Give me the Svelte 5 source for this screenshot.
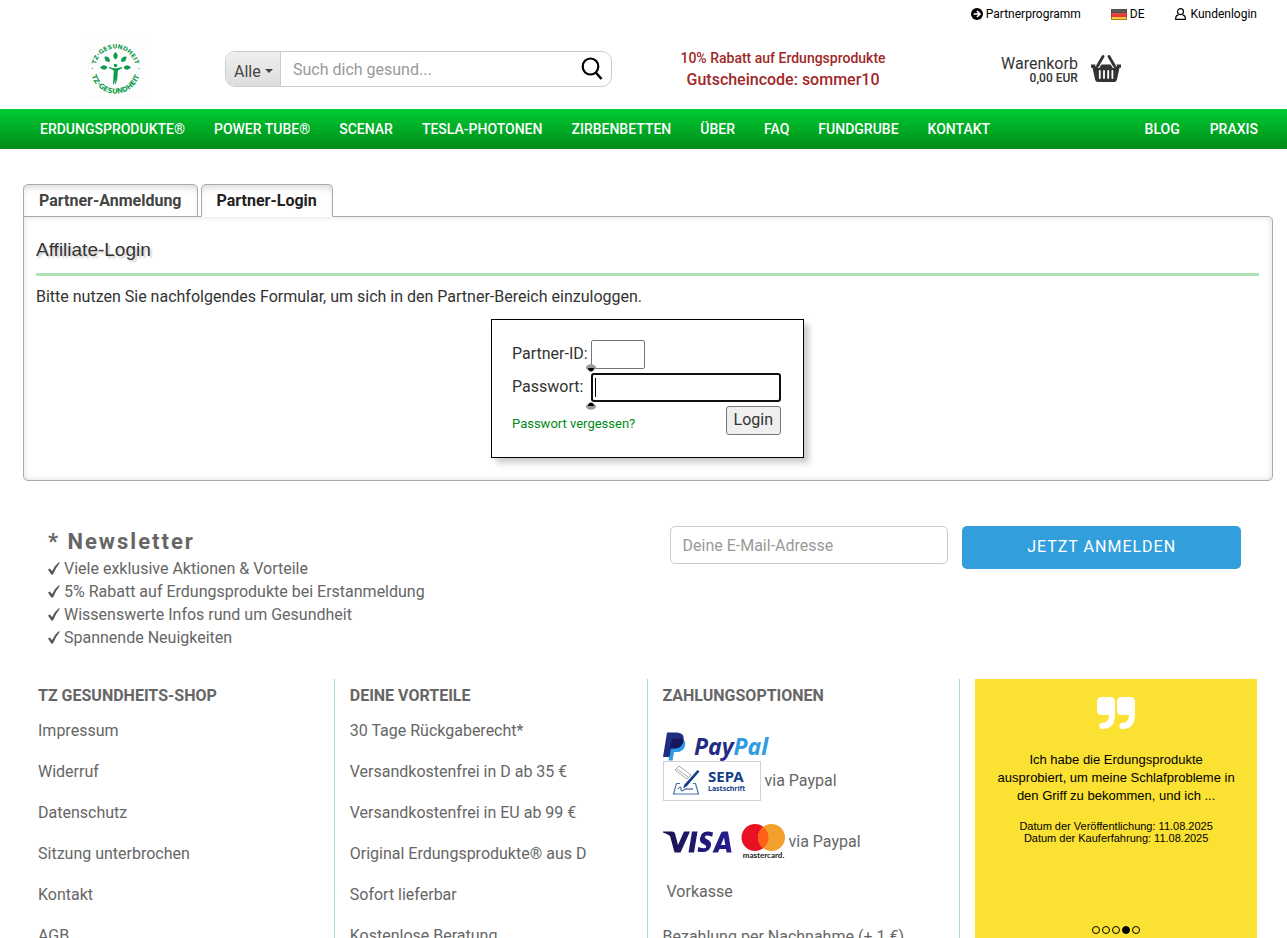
<script>
  const mainNav = ['ERDUNGSPRODUKTE®', 'POWER TUBE®', 'SCENAR', 'TESLA-PHOTONEN', 'ZIRBENBETTEN', 'ÜBER', 'FAQ', 'FUNDGRUBE', 'KONTAKT'];
  const sideNav = ['BLOG', 'PRAXIS'];
  const benefits = [
    'Viele exklusive Aktionen & Vorteile',
    '5% Rabatt auf Erdungsprodukte bei Erstanmeldung',
    'Wissenswerte Infos rund um Gesundheit',
    'Spannende Neuigkeiten'
  ];
  const shopLinks = ['Impressum', 'Widerruf', 'Datenschutz', 'Sitzung unterbrochen', 'Kontakt', 'AGB'];
  const advantages = [
    '30 Tage Rückgaberecht*',
    'Versandkostenfrei in D ab 35 €',
    'Versandkostenfrei in EU ab 99 €',
    'Original Erdungsprodukte® aus D',
    'Sofort lieferbar',
    'Kostenlose Beratung'
  ];
  const leaves = [-90, -45, 0, 45, 90];
  let slide = $state(3);
</script>

<header>
  <div class="topbar">
    <a href="#partner">
      <svg width="12" height="12" viewBox="0 0 12 12" aria-hidden="true">
        <circle cx="6" cy="6" r="6" fill="#000" />
        <path d="M2.6 6h6M6 3l3 3-3 3" fill="none" stroke="#fff" stroke-width="1.7" />
      </svg>
      Partnerprogramm
    </a>
    <a href="#de">
      <svg width="16" height="11" viewBox="0 0 16 11" aria-hidden="true">
        <defs>
          <linearGradient id="gloss" x1="0" y1="0" x2="0" y2="1">
            <stop offset="0" stop-color="#fff" stop-opacity=".3" />
            <stop offset="1" stop-color="#fff" stop-opacity=".05" />
          </linearGradient>
        </defs>
        <rect width="16" height="4" fill="#222" />
        <rect y="4" width="16" height="4" fill="#e31616" />
        <rect y="8" width="16" height="3" fill="#f7c52a" />
        <rect width="16" height="11" fill="url(#gloss)" />
        <rect x=".5" y=".5" width="15" height="10" fill="none" stroke="#5a3a20" stroke-opacity=".5" />
      </svg>
      DE
    </a>
    <a class="account" href="#login">
      <svg width="11" height="12" viewBox="0 0 11 12" fill="none" stroke="#000" stroke-width="1.2" aria-hidden="true">
        <circle cx="5.500" cy="3.700" r="3" />
        <path d="M3.400 6.800C1.500 7.200.7 8.500.7 10v1.300h9.600V10c0-1.500-.8-2.800-2.700-3.200" />
      </svg>
      Kundenlogin
    </a>
  </div>

  <div class="masthead">
    <a class="logo" href="#home" aria-label="Startseite">
      <svg width="60" height="60" viewBox="0 0 60 60">
        <rect width="60" height="60" fill="#fdfdfd" />
        <path id="arc-top" d="M9.500 29.500a20 20 0 0 1 40 0" fill="none" />
        <path id="arc-bottom" d="M4.500 29.500a25 25 0 0 0 50 0" fill="none" />
        <text><textPath href="#arc-top" startOffset="50%">TZ·GESUNDHEIT</textPath></text>
        <text class="under"><textPath href="#arc-bottom" startOffset="50%">TZ·GESUNDHEIT</textPath></text>
        <g fill="#0d9b4c">
          <circle cx="6.500" cy="29.500" r=".6" /><circle cx="53" cy="29.500" r=".6" />
          {#each leaves as angle}
            <path d="M29.500 20.500C26.500 18 26.700 16 29.500 13c2.800 3 3 5 0 7.500z" transform={`rotate(${angle} 29.500 28.500)`} />
          {/each}
          <circle cx="29.500" cy="26.500" r="1.700" />
          <path d="M23 28l5 1.200h3L36 28v1.200l-4 2.300c-.8 5 .2 10-3 14.500l.5-6-1.500 5-1 .500.800-14L23 29z" />
        </g>
      </svg>
    </a>

    <form class="search" role="search" onsubmit={(e) => e.preventDefault()}>
      <button class="scope" type="button">Alle <span class="caret"></span></button>
      <input type="search" placeholder="Such dich gesund..." aria-label="Suche" />
      <button class="go" aria-label="Suchen">
        <svg width="22" height="24" viewBox="0 0 22 24" fill="none" stroke="#000" stroke-width="2.2">
          <ellipse cx="9.500" cy="9.500" rx="7.800" ry="8" />
          <path d="M14.800 15.500L20.500 22" stroke-width="2.600" />
        </svg>
      </button>
    </form>

    <p class="coupon"><small>10% Rabatt auf Erdungsprodukte</small>Gutscheincode: sommer10</p>

    <a class="cart" href="#cart">
      <span>Warenkorb<strong>0,00 EUR</strong></span>
      <svg width="30" height="27" viewBox="0 0 30 27" aria-hidden="true">
        <path d="M0 9.500h30v3.200h-1.500L25.800 25q-.5 2-2.500 2H6.700q-2 0-2.500-2L1.500 12.700H0z" fill="#333" />
        <path d="M6 12L12 1.500M24 12L18 1.500" stroke="#fff" stroke-width="5" />
        <path d="M6.500 11L12 1.500M23.500 11L18 1.500" stroke="#333" stroke-width="2.800" stroke-linecap="round" />
        <path d="M8.800 16v7M13 16v7M17.200 16v7M21.400 16v7" stroke="#fff" stroke-width="1.800" stroke-linecap="round" />
      </svg>
    </a>
  </div>

  <nav>
    <ul class="primary">{#each mainNav as item}<li><a href="#nav">{item}</a></li>{/each}</ul>
    <ul>{#each sideNav as item}<li><a href="#nav">{item}</a></li>{/each}</ul>
  </nav>
</header>

<main>
  <div class="tabs">
    <a href="#register">Partner-Anmeldung</a>
    <a class="active" href="#affiliate">Partner-Login</a>
  </div>
  <section class="panel">
    <h1>Affiliate-Login</h1>
    <p>Bitte nutzen Sie nachfolgendes Formular, um sich in den Partner-Bereich einzuloggen.</p>
    <form class="login" onsubmit={(e) => e.preventDefault()}>
      <label for="pid">Partner-ID:</label>
      <input id="pid" class="short" type="text" />
      <label for="pw">Passwort:</label>
      <span class="field">
        <input id="pw" type="password" />
        <i class="cursor"></i>
        <svg class="handle top" width="10" height="8" viewBox="0 0 10 8"><ellipse cx="5" cy="3.500" rx="5" ry="3.200" fill="#999" /><path d="M2 4h6Q7.500 7.500 5 7.500T2 4z" /></svg>
        <svg class="handle bottom" width="10" height="8" viewBox="0 0 10 8"><ellipse cx="5" cy="4.500" rx="5" ry="3.200" fill="#999" /><path d="M2 4h6Q7.500 .5 5 .5T2 4z" /></svg>
      </span>
      <div class="actions">
        <a href="#forgot">Passwort vergessen?</a>
        <button>Login</button>
      </div>
    </form>
  </section>

  <section class="newsletter">
    <div>
      <h2>* Newsletter</h2>
      <ul>
        {#each benefits as benefit}
          <li>
            <svg width="12" height="14" viewBox="0 0 12 14" aria-hidden="true"><path d="M0 7.500l2-1L4 9.300Q6.500 3.500 10.500.5H12Q7.500 6 5 12.500H3.300z" fill="#555" /></svg>
            {benefit}
          </li>
        {/each}
      </ul>
    </div>
    <form onsubmit={(e) => e.preventDefault()}>
      <input type="email" placeholder="Deine E-Mail-Adresse" aria-label="E-Mail-Adresse" />
      <button>JETZT ANMELDEN</button>
    </form>
  </section>
</main>

<footer>
  <div class="col">
    <h3>TZ GESUNDHEITS-SHOP</h3>
    <ul>{#each shopLinks as link}<li><a href="#info">{link}</a></li>{/each}</ul>
  </div>
  <div class="col">
    <h3>DEINE VORTEILE</h3>
    <ul>{#each advantages as item}<li>{item}</li>{/each}</ul>
  </div>
  <div class="col">
    <h3>ZAHLUNGSOPTIONEN</h3>
    <div class="payments">
      <svg class="paypal" width="111" height="29" viewBox="0 0 111 29" role="img" aria-label="PayPal">
        <path d="M9 6h9q5.500 2 4 8-2 6-8 6h-3L9.500 28.500H5.500z" fill="#2f9be0" />
        <path d="M4 .5h10q8 .5 6.500 8-1.500 8-9 8H8L6.500 25H0z" fill="#1f2d83" />
        <path d="M9 6.500h9.500q2 .8 2 2-1.500 8-9 8H7.500z" fill="#17175f" />
        <text x="31" y="23"><tspan fill="#1f2d83">Pay</tspan><tspan fill="#2f9be0">Pal</tspan></text>
      </svg>
      <div class="pay">
        <svg width="98" height="40" viewBox="0 0 98 40" role="img" aria-label="SEPA Lastschrift">
          <rect x=".5" y=".5" width="97" height="39" fill="#fff" stroke="#d0d2d8" />
          <path d="M17 22.500h-3.500L10.500 33h25l-3-10.500H30" fill="none" stroke="#4477a8" stroke-width="1.200" />
          <path d="M12 9l4-4 12 9-4 4zM14 8l11 8" fill="none" stroke="#aaa" />
          <path d="M34.500 9l2 1.500L24 25l-4 2.500 1.500-4z" fill="#123f87" />
          <path d="M15 28q3-4 3 0t4 0h8" fill="none" stroke="#123f87" />
          <text class="sepa" x="45" y="21">SEPA</text>
          <text class="debit" x="45" y="30">Lastschrift</text>
        </svg>
        via Paypal
      </div>
      <div class="pay cards">
        <svg width="122" height="35" viewBox="0 0 122 35" role="img" aria-label="Visa, Mastercard">
          <defs><linearGradient id="visa"><stop stop-color="#1a1450" /><stop offset="1" stop-color="#261d92" /></linearGradient></defs>
          <path d="M0 7.500h9q2.500 0 3 2L15 21l6-13.500h6L17.500 28.500h-6L7 12Q4 9.500 0 8.500zM29 7.500h5.500L31 28.500h-5.500zM50 8.500l-.8 4.300q-7-2.800-7.500.2 0 1.200 3 2.700 4 2 3.300 5.800-1.500 8.500-13.500 6l.8-4.500q7.500 2.700 8-.3 0-1.300-3-2.700-4-2-3.300-5.500Q38.500 5 50 8.500zM60 7.500h5L68.500 28.500h-5L63 25h-6.500L55 28.500h-5.500L58 9Q58.500 7.500 60 7.500zM61 13.500L58 21h4.300z" fill="url(#visa)" fill-rule="evenodd" />
          <circle cx="92" cy="13.500" r="13.500" fill="#e81224" />
          <circle cx="108.500" cy="13.500" r="13.500" fill="#f4a02c" />
          <path d="M100.250 2.800a13.500 13.500 0 0 1 0 21.400 13.500 13.500 0 0 1 0-21.400z" fill="#ff6017" />
          <text class="mc" x="100.500" y="34">mastercard.</text>
        </svg>
        via Paypal
      </div>
      <p class="prepaid">Vorkasse</p>
      <p>Bezahlung per Nachnahme (+ 1 €)</p>
    </div>
  </div>
  <div class="col last">
    <section class="reviews">
      <svg width="38" height="32" viewBox="0 0 38 32" fill="#fff" aria-hidden="true">
        <path id="quote" d="M4.500 0h9Q18 0 18 4.500V18Q18 32 5 32 2.500 32 2.500 30v-2.500Q2.500 26 4.500 26 12 26 12 18H4.500Q0 18 0 13.500v-9Q0 0 4.500 0z" />
        <use href="#quote" x="20" />
      </svg>
      <p>Ich habe die Erdungsprodukte ausprobiert, um meine Schlafprobleme in den Griff zu bekommen, und ich ...</p>
      <p class="dates">Datum der Veröffentlichung: 11.08.2025<br />Datum der Kauferfahrung: 11.08.2025</p>
      <div class="dots">
        {#each [0, 1, 2, 3, 4] as i}
          <button class:current={slide === i} aria-label={`Bewertung ${i + 1}`} onclick={() => (slide = i)}></button>
        {/each}
      </div>
    </section>
  </div>
</footer>

<style>
  :global(body) { margin: 0; background: #fff; color: #333; font: 16px/23px Roboto, sans-serif; }
  * { box-sizing: border-box; }
  a { color: inherit; text-decoration: none; }
  ul, p, h1, h2, h3 { margin: 0; padding: 0; list-style: none; }
  button, input { font: inherit; color: inherit; }
  svg { display: block; flex: none; }

  .topbar { display: flex; justify-content: flex-end; gap: 30px; padding: 4px 30px 0 0; height: 28px; font-size: 12px; line-height: 20px; color: #000; }
  .topbar a { display: flex; align-items: center; gap: 3px; height: 20px; }
  .topbar .account { gap: 5px; }
  .masthead { display: grid; grid-template-columns: 225fr 387fr 342fr 333fr; align-items: center; height: 81px; }
  .logo { justify-self: center; padding-left: 7px; }
  .logo text { font: bold 6px "DejaVu Sans", sans-serif; fill: #0d9b4c; text-anchor: middle; }
  .logo .under { font-size: 7px; }
  .search { display: flex; height: 36px; border: 1px solid #ccc; border-radius: 10px; overflow: hidden; }
  .search button { border: 0; background: none; }
  .search .scope { display: flex; align-items: center; gap: 4px; width: 55px; padding: 5px 8px 0; background: linear-gradient(#efefef, #ddd); border-right: 1px solid #ccc; color: #444; }
  .caret { border: 4px solid transparent; border-top-color: #444; border-bottom: 0; }
  .search input { flex: 1; min-width: 0; border: 0; padding: 2px 12px 0; background: none; }
  .search .go { display: flex; align-items: center; padding: 0 8px; }
  ::placeholder { color: #999; opacity: 1; }
  .coupon { text-align: center; font-weight: 500; line-height: 22px; color: #a12828; }
  .coupon small { display: block; font-size: 14px; }
  .cart { display: flex; align-items: center; gap: 13px; padding-left: 47px; }
  .cart span { padding-top: 2px; text-align: right; line-height: 16px; }
  .cart strong { display: block; font-size: 12px; font-weight: 500; line-height: 12px; }
  nav { display: flex; justify-content: space-between; padding: 0 29px 0 40px; background: linear-gradient(#00cc33, #008a17); color: #fff; font-size: 14px; font-weight: 500; line-height: 40px; }
  nav ul { display: flex; gap: 30px; }
  nav .primary { gap: 29px; }

  main { padding: 35px 14px 0 23px; }
  .tabs { display: flex; gap: 3px; }
  .tabs a { position: relative; height: 33px; margin-bottom: -1px; padding: 0 15px; border: 1px solid #aaa; border-radius: 5px 5px 0 0; box-shadow: inset 0 5px 8px -4px #ccc; background: #fff; color: #444; font-weight: bold; line-height: 32px; }
  .tabs .active { border-bottom-color: #fff; color: #222; z-index: 1; }
  .panel { padding: 21px 13px 22px 12px; border: 1px solid #aaa; border-radius: 0 5px 5px 5px; box-shadow: inset 0 0 6px #ddd; }
  h1 { padding-bottom: 12px; border-bottom: 3px solid #ade3b6; font: 19px/23px "Liberation Sans", Arial, sans-serif; text-shadow: 2px 2px 2px #ccc; }
  .panel > p { padding: 9px 0 11px; }
  .login { display: grid; grid-template-columns: 75px auto; gap: 4px; width: 313px; margin: 0 auto; padding: 20px 22px 22px 20px; border: 1px solid #000; background: #fff; box-shadow: 5px 5px 6px #ccc; }
  .login label { line-height: 27px; white-space: nowrap; }
  .login input { display: block; width: 100%; height: 29px; padding: 1px 4px; border: 1px solid #767676; border-radius: 2px; background: #fff; }
  .login .short { width: 54px; }
  .field { position: relative; }
  .login .field input { border: 2px solid #101010; border-radius: 3px; outline: 0; }
  .cursor { position: absolute; left: 4px; top: 5px; width: 1px; height: 19px; background: #000; }
  .handle { position: absolute; left: -5px; }
  .top { top: -9px; }
  .bottom { top: 29px; }
  .actions { grid-column: 1 / -1; display: flex; justify-content: space-between; align-items: center; }
  .actions a { padding-top: 6px; color: #008a17; font-size: 13px; }
  .actions button { height: 29px; padding: 0 7px 2px; border: 1px solid #767676; border-radius: 3px; background: #efefef; }

  .newsletter { display: grid; grid-template-columns: 1fr 1fr; padding: 45px 32px 0 25px; color: #666; }
  h2 { font-size: 22px; line-height: 31px; letter-spacing: 2px; }
  .newsletter li { display: flex; align-items: center; gap: 4px; }
  .newsletter form { display: grid; grid-template-columns: 1fr 1fr; gap: 14px; align-items: start; padding-left: 25px; }
  .newsletter input { width: 100%; height: 38px; padding: 0 12px; border: 1px solid #ccc; border-radius: 5px; }
  .newsletter button { height: 43px; padding: 0 0 2px; border: 0; border-radius: 5px; background: #329fdc; color: #fff; letter-spacing: 1px; }

  footer { display: grid; grid-template-columns: repeat(4, 1fr); padding: 30px 14px 0 22px; color: #666; }
  .col { padding: 5px 15px 20px; border-right: 1px solid #ade3b6; }
  .col:first-child { padding-left: 16px; }
  .col:nth-child(3) { padding-right: 0; }
  .last { padding: 0 16px 0 15px; border: 0; }
  h3 { font-size: 16px; font-weight: bold; line-height: 23px; }
  .col ul { display: grid; gap: 18px; padding-top: 12px; }
  .payments { padding-top: 25px; }
  .paypal { overflow: visible; }
  .paypal text { font: italic bold 23px "Noto Sans", sans-serif; }
  .pay { display: flex; align-items: center; gap: 4px; line-height: 20px; }
  .sepa { font: bold 15px "Noto Sans", sans-serif; fill: #123f87; }
  .debit { font: bold 7px "Noto Sans", sans-serif; fill: #123f87; }
  .cards { padding: 23px 0 21px; }
  .mc { font: bold 8px Lato, sans-serif; fill: #222; text-anchor: middle; }
  .prepaid { padding: 0 4px 22px; }
  .reviews { display: flex; flex-direction: column; align-items: center; height: 269px; padding: 18px 20px 14px; background: #fae132; color: #000; font: 13px/18px "Liberation Sans", Arial, sans-serif; text-align: center; }
  .reviews p { padding-top: 22px; }
  .reviews .dates { padding-top: 15px; font-size: 11px; line-height: 12px; }
  .dots { display: flex; gap: 2px; margin-top: auto; }
  .dots button { width: 8px; height: 8px; padding: 0; border: 1px solid #000; border-radius: 50%; background: none; }
  .dots .current { background: #000; }
</style>
